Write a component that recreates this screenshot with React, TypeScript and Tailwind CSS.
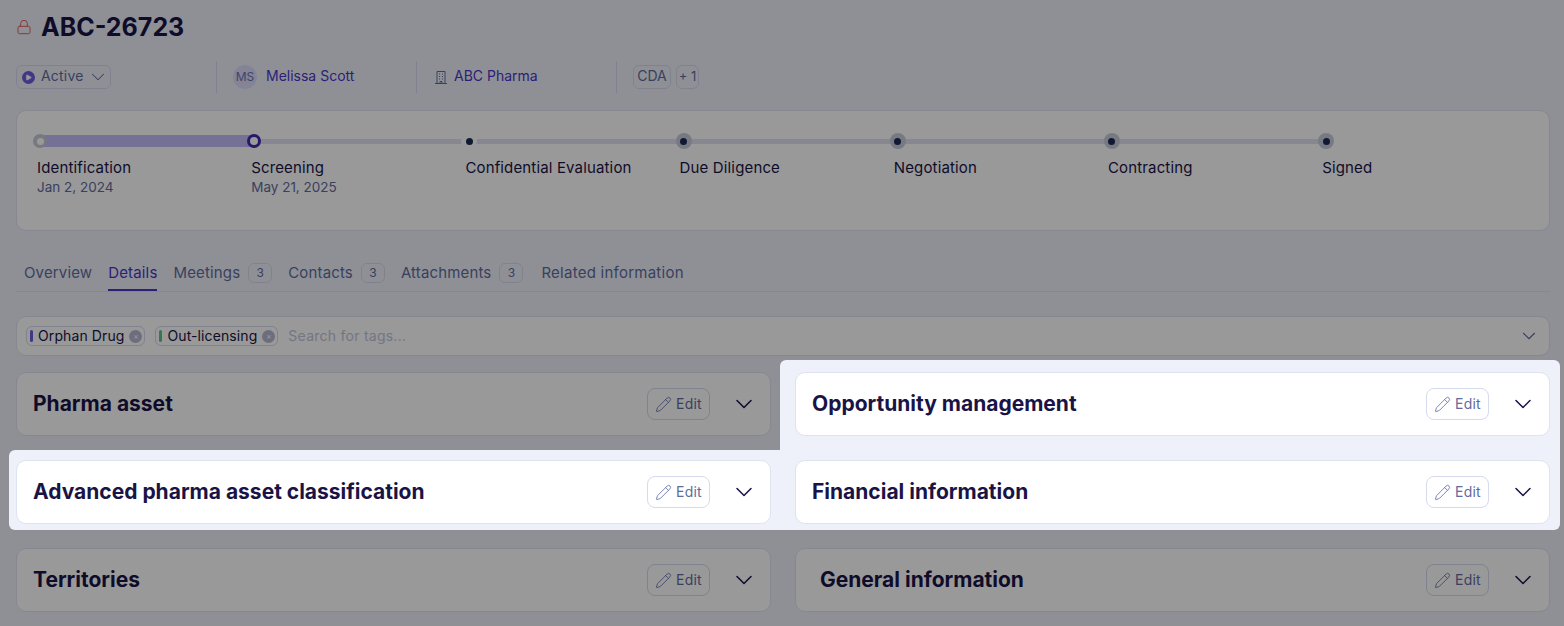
import { ChevronDown, Pencil, Lock, Play } from "lucide-react";

const steps = [
  { label: "Identification", date: "Jan 2, 2024" },
  { label: "Screening", date: "May 21, 2025" },
  { label: "Confidential Evaluation" },
  { label: "Due Diligence" },
  { label: "Negotiation" },
  { label: "Contracting" },
  { label: "Signed" },
];

const tabs = [
  { label: "Overview" },
  { label: "Details", active: true },
  { label: "Meetings", count: 3 },
  { label: "Contacts", count: 3 },
  { label: "Attachments", count: 3 },
];

function Dot({ i }: { i: number }) {
  if (i === 0) {
    return (
      <span className="flex size-[14px] items-center justify-center rounded-full bg-[#c6c9d8]">
        <span className="size-[7px] rounded-full bg-white" />
      </span>
    );
  }
  if (i === 1) {
    return (
      <span className="flex size-[14px] items-center justify-center rounded-full bg-[#3f2bb5]">
        <span className="size-2 rounded-full bg-white" />
      </span>
    );
  }
  if (i === 2) {
    return (
      <span className="flex size-[16px] items-center justify-center rounded-full bg-white">
        <span className="size-[7px] rounded-full bg-[#1b2b52]" />
      </span>
    );
  }
  return (
    <span className="flex size-[16px] items-center justify-center rounded-full bg-[#c9ccdb]">
      <span className="size-[7px] rounded-full bg-[#1b2b52]" />
    </span>
  );
}

function Section({ title, lit, inset }: { title: string; lit?: boolean; inset?: boolean }) {
  return (
    <div
      className={`flex h-16 items-center justify-between rounded-[10px] border border-[#dfe2f0] bg-white pr-3 ${
        inset ? "pl-6" : "pl-4"
      } ${lit ? "relative z-30" : ""}`}
    >
      <h2 className="pb-[1px] text-[21px] font-bold text-[#1a1446]">{title}</h2>
      <div className="flex items-center gap-5">
        <button className="flex h-8 w-[63px] items-center justify-center gap-1 rounded-lg border border-[#d5daee] text-sm tracking-[0.2px] text-[#5f6c9e]">
          <Pencil className="size-[17px] shrink-0 text-[#6f7bae]" strokeWidth={1.3} />
          Edit
        </button>
        <ChevronDown className="size-7 text-[#1a1446]" strokeWidth={1.3} />
      </div>
    </div>
  );
}

function Tag({ label, color }: { label: string; color: string }) {
  return (
    <span className="flex h-5 items-center gap-[5px] rounded-md border border-[#d5daee] pl-[3px] pr-[2px] tracking-[0.1px]">
      <span className={`h-3 w-[3px] rounded ${color}`} />
      {label}
      <span className="size-[13px] rounded-full bg-[#b4b8d0] text-center text-[8px] leading-[13px] text-white">×</span>
    </span>
  );
}

export default function App() {
  return (
    <div className="relative h-[626px] overflow-hidden bg-[#eef1fa] pl-4 pr-[14px] font-['Inter',sans-serif] text-[#1a1446]">
      <div className="flex h-[54px] items-center gap-[9px]">
        <Lock className="size-4 text-[#e0645c]" strokeWidth={1.5} />
        <h1 className="text-[25px] font-bold leading-none">ABC-26723</h1>
      </div>

      <div className="mt-[11px] flex h-6 items-center text-sm">
        <div className="w-[200px]">
          <button className="flex h-6 w-[95px] items-center rounded-md border border-[#d5daee] pl-[5px] tracking-[0.2px] text-[#5f6c9e]">
            <span className="mr-[6px] flex size-[13px] shrink-0 items-center justify-center rounded-full bg-[#6d5ce0]">
              <Play className="size-[7px] fill-white text-white" />
            </span>
            <span className="mb-[2px]">Active</span>
            <ChevronDown className="ml-[3px] size-[22px] shrink-0" strokeWidth={1.1} />
          </button>
        </div>
        <div className="flex h-8 w-[200px] items-center gap-[9px] border-l border-[#d5daee] pl-4">
          <span className="flex size-6 items-center justify-center rounded-full bg-[#dcdcfa] text-xs text-[#6a6fb5]">MS</span>
          <span className="mb-[2px] text-[#4a35c9]">Melissa Scott</span>
        </div>
        <div className="flex h-8 w-[200px] items-center gap-[7px] border-l border-[#d5daee] pl-[18px]">
          <svg viewBox="0 0 12 13" className="h-[13px] w-3 text-[#5f6c9e]" fill="none" stroke="currentColor" strokeWidth="1">
            <path d="M2 12.5V.5h8v12M0 12.5h12M4 3h1M7 3h1M4 5.5h1M7 5.5h1M4 8h1M7 8h1M5 12.5v-2h2v2" />
          </svg>
          <span className="mb-[2px] text-[#4a35c9]">ABC Pharma</span>
        </div>
        <div className="flex h-8 items-center gap-[5px] border-l border-[#d5daee] pl-4 text-[#5f6c9e]">
          <span className="flex h-6 w-[38px] items-center justify-center rounded-md border border-[#d5daee] pb-[2px]">CDA</span>
          <span className="flex h-6 w-[23px] items-center justify-center rounded-md border border-[#d5daee] pb-[2px] text-[13px]">+ 1</span>
        </div>
      </div>

      <div className="mt-[21px] h-[121px] rounded-[10px] border border-[#dfe2f0] bg-white pl-[20px] pt-[22px]">
        <div className="flex">
          {steps.map((s, i) => (
            <div key={s.label} className="w-[214.2px] shrink-0">
              <div className="relative flex h-[16px] items-center">
                {i < 6 && (
                  <span
                    className={`absolute left-[3px] w-[214.2px] ${
                      i === 0 ? "h-3 bg-[#c1bbfa]" : "h-[5px] bg-[#e0e2f0]"
                    }`}
                  />
                )}
                <span className="relative -ml-[4px]">
                  <Dot i={i} />
                </span>
              </div>
              <div className="mt-[9px] text-[15px] leading-[19px] tracking-[0.15px]">{s.label}</div>
              {s.date && <div className="text-[13.5px] leading-5 text-[#5f6c9e]">{s.date}</div>}
            </div>
          ))}
        </div>
      </div>

      <div className="mt-[26px] flex h-[35px] items-start gap-4 border-b border-[#dfe2f0] pl-[8px] text-[15px] tracking-[0.15px] text-[#5f6c9e]">
        {tabs.map((t) => (
          <div
            key={t.label}
            className={`flex h-[34px] items-center gap-[8px] border-b-2 ${
              t.active ? "border-[#4a35c9] text-[#4a35c9]" : "border-transparent"
            }`}
          >
            {t.label}
            {t.count && (
              <span className="flex h-5 w-6 items-center justify-center rounded-md border border-[#d5daee] text-xs">
                {t.count}
              </span>
            )}
          </div>
        ))}
        <div className="ml-[2px] flex h-[34px] items-center border-b-2 border-transparent tracking-[0.25px]">Related information</div>
      </div>

      <div className="mt-6 flex h-10 items-center gap-[10px] rounded-[10px] border border-[#dfe2f0] bg-white pl-[9px] pr-[9px] text-sm">
        <Tag label="Orphan Drug" color="bg-[#6d5ce0]" />
        <Tag label="Out-licensing" color="bg-[#5fc48a]" />
        <span className="flex-1 tracking-[0.25px] text-[#c0c5da]">Search for tags...</span>
        <ChevronDown className="size-[22px] text-[#5f6c9e]" strokeWidth={1.2} />
      </div>

      <div className="mt-4 grid grid-cols-2 gap-x-6 gap-y-6">
        <Section title="Pharma asset" />
        <div className="relative">
          <span className="absolute -left-[15px] -right-[10px] -top-[12px] z-20 h-[170px] rounded-t-md rounded-br-md bg-[#eef1fa]" />
          <Section title="Opportunity management" lit />
        </div>
        <div className="relative">
          <span className="absolute -left-[7px] -right-[9px] -top-[10px] -bottom-[6px] z-20 rounded-l-md bg-[#eef1fa]" />
          <Section title="Advanced pharma asset classification" lit />
        </div>
        <Section title="Financial information" lit />
        <Section title="Territories" />
        <Section title="General information" inset />
      </div>

      {/* dim layer of the tour, the lit cards sit above it */}
      <div className="absolute inset-0 z-10 bg-black/40" />
    </div>
  );
}
